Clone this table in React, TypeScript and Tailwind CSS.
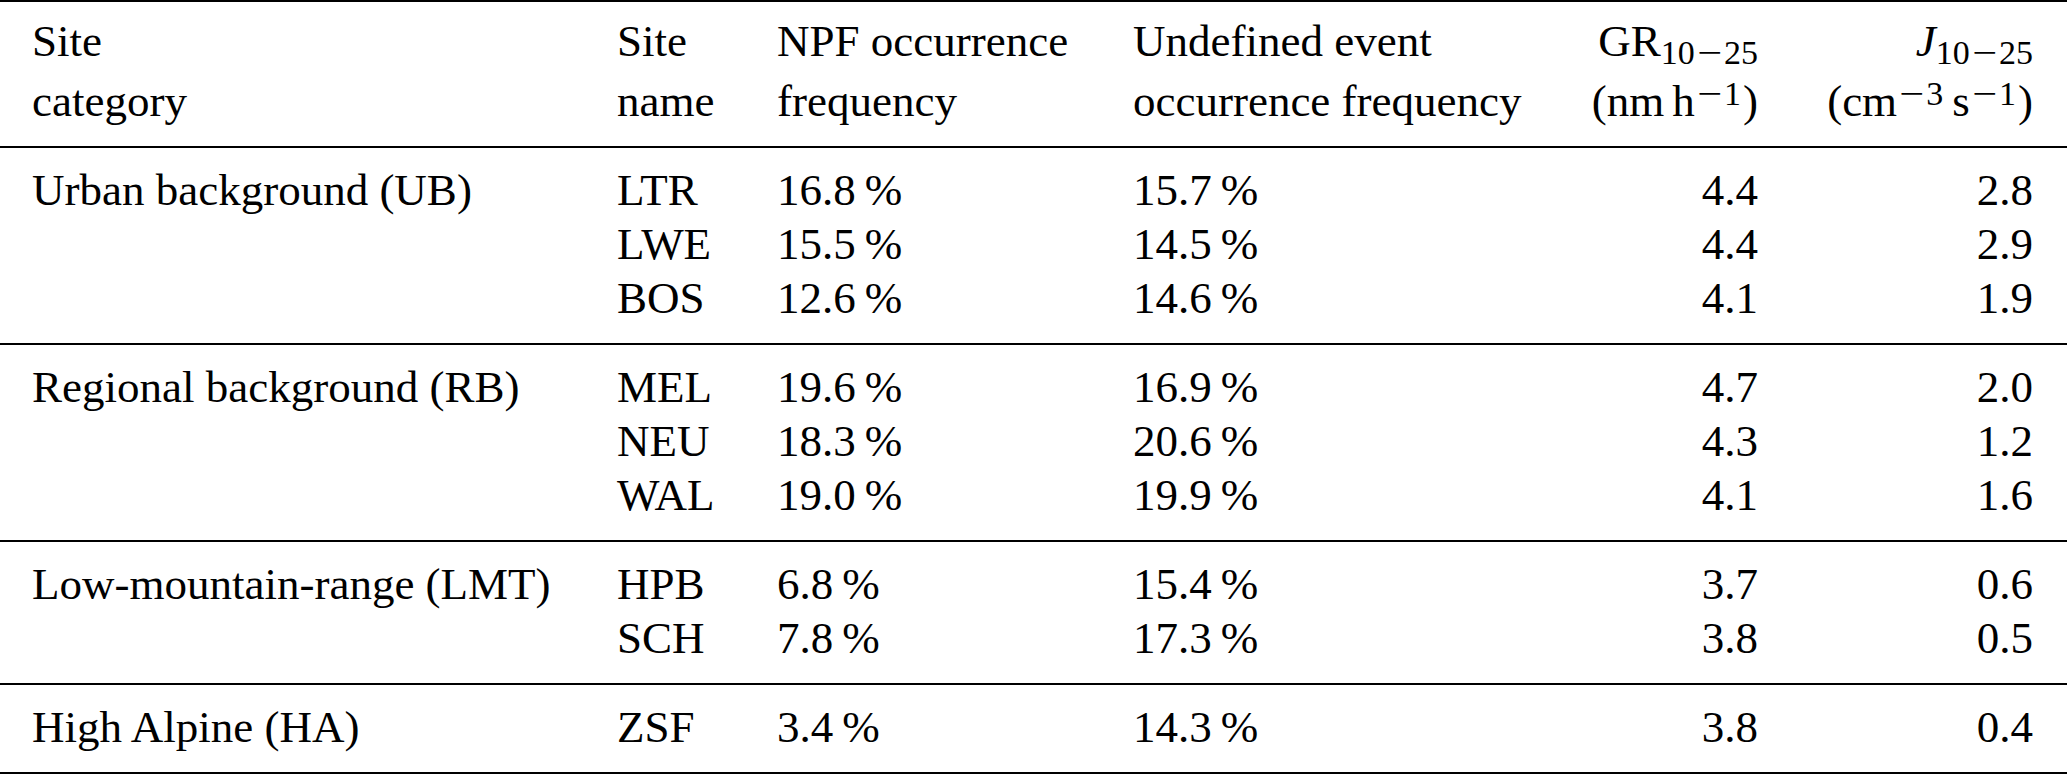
import React from "react";

type Row = { name: string; npf: string; undef: string; gr: string; j: string };
type Group = { category: string; rows: Row[] };

const groups: Group[] = [
  {
    category: "Urban background (UB)",
    rows: [
      { name: "LTR", npf: "16.8", undef: "15.7", gr: "4.4", j: "2.8" },
      { name: "LWE", npf: "15.5", undef: "14.5", gr: "4.4", j: "2.9" },
      { name: "BOS", npf: "12.6", undef: "14.6", gr: "4.1", j: "1.9" },
    ],
  },
  {
    category: "Regional background (RB)",
    rows: [
      { name: "MEL", npf: "19.6", undef: "16.9", gr: "4.7", j: "2.0" },
      { name: "NEU", npf: "18.3", undef: "20.6", gr: "4.3", j: "1.2" },
      { name: "WAL", npf: "19.0", undef: "19.9", gr: "4.1", j: "1.6" },
    ],
  },
  {
    category: "Low-mountain-range (LMT)",
    rows: [
      { name: "HPB", npf: "6.8", undef: "15.4", gr: "3.7", j: "0.6" },
      { name: "SCH", npf: "7.8", undef: "17.3", gr: "3.8", j: "0.5" },
    ],
  },
  {
    category: "High Alpine (HA)",
    rows: [{ name: "ZSF", npf: "3.4", undef: "14.3", gr: "3.8", j: "0.4" }],
  },
];

const gridCols =
  "grid grid-cols-[585px_160px_356px_427px_198px_275px] pl-[32px] pr-[34px]";

function Sub({ children }: { children: React.ReactNode }) {
  return <span className="text-[34px] leading-none align-[-8px]">{children}</span>;
}
function Sup({ children }: { children: React.ReactNode }) {
  return <span className="text-[34px] leading-none align-[11px]">{children}</span>;
}
function Minus() {
  return <span className="inline-block mx-[5px] scale-x-[1.3]">−</span>;
}

export default function App() {
  return (
    <div className="w-[2067px] h-[775px] bg-white text-black text-[45px] font-serif">
      <div className="font-['Liberation_Serif'] border-t-2 border-b-2 border-black">
        {/* Header */}
        <div className={`${gridCols} leading-[60px] pt-[9px] pb-[15px]`}>
          <div>
            <div>Site</div>
            <div>category</div>
          </div>
          <div>
            <div>Site</div>
            <div>name</div>
          </div>
          <div>
            <div>NPF occurrence</div>
            <div>frequency</div>
          </div>
          <div>
            <div>Undefined event</div>
            <div>occurrence frequency</div>
          </div>
          <div className="text-right whitespace-nowrap">
            <div>
              GR
              <Sub>
                10
                <Minus />
                25
              </Sub>
            </div>
            <div>
              (nm<span className="ml-[8px]">h</span>
              <Sup>
                <Minus />1
              </Sup>
              <span className="ml-[2px]">)</span>
            </div>
          </div>
          <div className="text-right whitespace-nowrap">
            <div>
              <span className="italic">J</span>
              <Sub>
                10
                <Minus />
                25
              </Sub>
            </div>
            <div>
              (cm
              <Sup>
                <Minus />3
              </Sup>
              <span className="ml-[9px]">s</span>
              <Sup>
                <Minus />1
              </Sup>
              <span className="ml-[2px]">)</span>
            </div>
          </div>
        </div>

        {groups.map((g) => (
          <div
            key={g.category}
            className={`${gridCols} border-t-2 border-black leading-[54px] pt-[15px] pb-[18px]`}
          >
            {g.rows.map((r, i) => (
              <React.Fragment key={r.name}>
                <div className="whitespace-nowrap">{i === 0 ? g.category : ""}</div>
                <div>{r.name}</div>
                <div className="whitespace-nowrap">{r.npf}{"\u2009"}%</div>
                <div className="whitespace-nowrap">{r.undef}{"\u2009"}%</div>
                <div className="text-right">{r.gr}</div>
                <div className="text-right">{r.j}</div>
              </React.Fragment>
            ))}
          </div>
        ))}
      </div>
    </div>
  );
}
